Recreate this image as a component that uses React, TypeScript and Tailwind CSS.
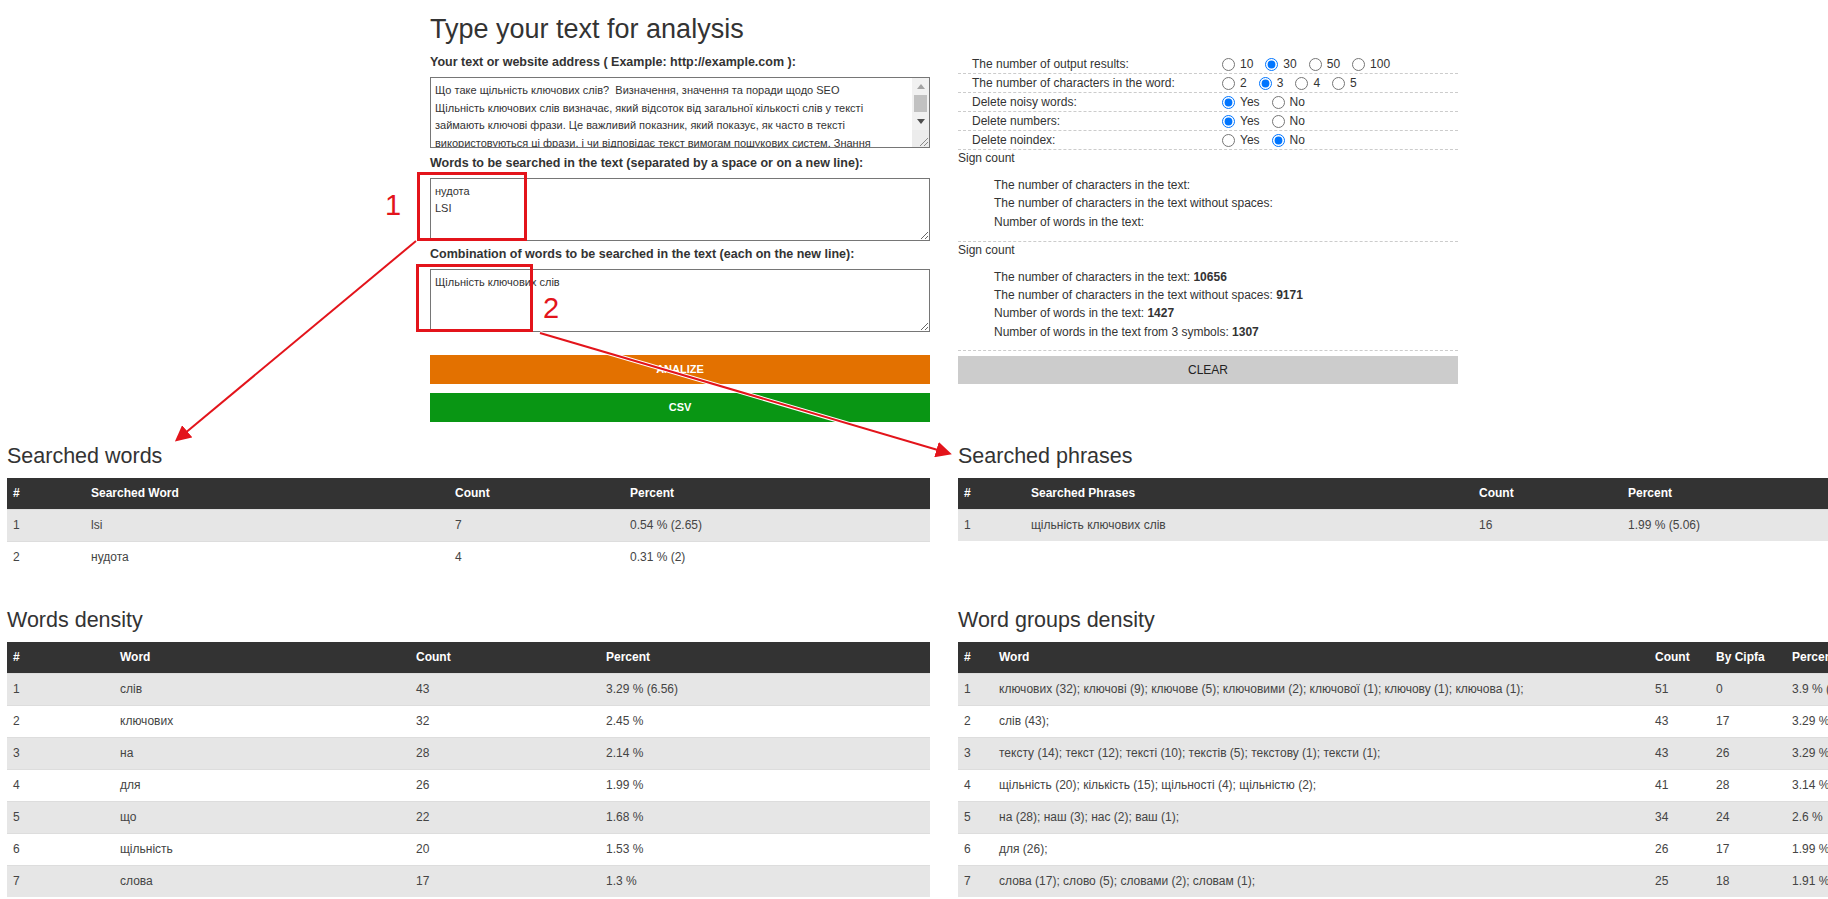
import React from "react";

type Opt = { label: string; checked?: boolean };

const options: { title: string; name: string; items: Opt[] }[] = [
  { title: "The number of output results:", name: "limit", items: [{ label: "10" }, { label: "30", checked: true }, { label: "50" }, { label: "100" }] },
  { title: "The number of characters in the word:", name: "minlen", items: [{ label: "2" }, { label: "3", checked: true }, { label: "4" }, { label: "5" }] },
  { title: "Delete noisy words:", name: "noisy", items: [{ label: "Yes", checked: true }, { label: "No" }] },
  { title: "Delete numbers:", name: "numbers", items: [{ label: "Yes", checked: true }, { label: "No" }] },
  { title: "Delete noindex:", name: "noindex", items: [{ label: "Yes" }, { label: "No", checked: true }] },
];

const sourceText =
  "Що таке щільність ключових слів?  Визначення, значення та поради щодо SEO\n" +
  "Щільність ключових слів визначає, який відсоток від загальної кількості слів у тексті\n" +
  "займають ключові фрази. Це важливий показник, який показує, як часто в тексті\n" +
  "використовуються ці фрази, і чи відповідає текст вимогам пошукових систем. Знання\n" +
  "щільності ключових слів допомагає оптимізувати текст і не перенасичувати його.\n" +
  "Як розрахувати щільність ключових слів?";

type TableProps = {
  cols: string[];
  head: string[];
  rows: string[][];
};

function DataTable({ cols, head, rows }: TableProps) {
  return (
    <table className="w-[923px] table-fixed border-collapse text-[12px]">
      <colgroup>
        {cols.map((c, i) => (
          <col key={i} className={c} />
        ))}
      </colgroup>
      <thead>
        <tr className="h-[31px] bg-[#333]">
          {head.map((h) => (
            <th key={h} className="whitespace-nowrap px-[6px] text-left font-bold text-white">
              {h}
            </th>
          ))}
        </tr>
      </thead>
      <tbody>
        {rows.map((r, i) => (
          <tr key={i} className={i % 2 === 0 ? "h-[32px] border-t border-[#ddd] bg-[#e6e6e6]" : "h-[32px] border-t border-[#ddd] bg-white"}>
            {r.map((c, j) => (
              <td key={j} className="overflow-hidden whitespace-nowrap px-[6px] text-[#444]">
                {c}
              </td>
            ))}
          </tr>
        ))}
      </tbody>
    </table>
  );
}

function Section({ title, children }: { title: string; children: React.ReactNode }) {
  return (
    <div className="mb-[13px]">
      <h3 className="mb-[10px] mt-[22px] h-[24px] text-[21.5px] leading-[24px] font-normal text-[#333]">{title}</h3>
      {children}
    </div>
  );
}

// classic scrollbar drawn over the long textarea
function Scrollbar() {
  return (
    <div className="pointer-events-none absolute right-[1px] top-[1px] flex w-[17px] flex-col bg-[#f1f1f1]">
      <div className="flex h-[17px] items-center justify-center">
        <svg width="8" height="5" viewBox="0 0 8 5">
          <path d="M0 5 L4 0 L8 5 z" fill="#a3a3a3" />
        </svg>
      </div>
      <div className="h-[18px] px-[2px]">
        <div className="h-[17px] bg-[#c1c1c1]" />
      </div>
      <div className="flex h-[17px] items-center justify-center">
        <svg width="8" height="5" viewBox="0 0 8 5">
          <path d="M0 0 L8 0 L4 5 z" fill="#505050" />
        </svg>
      </div>
      <div className="relative h-[17px] bg-[#ececec]">
        <svg className="absolute bottom-[1px] right-[1px]" width="10" height="10" viewBox="0 0 10 10">
          <path d="M2 10 L10 2 M6 10 L10 6" stroke="#8a8a8a" strokeWidth="1" />
        </svg>
      </div>
    </div>
  );
}

export default function App() {
  return (
    <div className="relative h-[899px] w-[1828px] overflow-hidden bg-white font-['Liberation_Sans',Arial,sans-serif] text-[#333]">
      {/* form + settings */}
      <div className="grid grid-cols-[923px_923px] gap-x-[28px] pl-[7px]">
        <div className="flex justify-end">
          <div className="w-[500px] pt-[14px]">
            <h1 className="h-[30px] text-[27px] leading-[30px] text-[#333]">Type your text for analysis</h1>
            <div className="mt-[10px] h-[16px] text-[12.5px] font-bold leading-[16px]">
              Your text or website address ( Example: http://example.com ):
            </div>
            <div className="relative mt-[7px]">
              <textarea
                className="block h-[71px] w-full resize-none overflow-hidden border border-[#767676] py-[4px] pl-[4px] pr-[20px] text-[11px] leading-[1.6] text-[#333] outline-none"
                defaultValue={sourceText}
              />
              <Scrollbar />
            </div>
            <div className="mt-[7px] h-[16px] text-[12.5px] font-bold leading-[16px]">
              Words to be searched in the text (separated by a space or on a new line):
            </div>
            <textarea
              className="mt-[7px] block h-[63px] w-full resize-y border border-[#767676] px-[4px] py-[4px] text-[11px] leading-[1.5] text-[#333] outline-none"
              defaultValue={"нудота\nLSI"}
            />
            <div className="mt-[5px] h-[16px] text-[12.5px] font-bold leading-[16px]">
              Combination of words to be searched in the text (each on the new line):
            </div>
            <textarea
              className="mt-[7px] block h-[63px] w-full resize-y border border-[#767676] px-[4px] py-[4px] text-[11px] leading-[1.6] text-[#333] outline-none"
              defaultValue="Щільність ключових слів"
            />
            <button className="mt-[23px] flex h-[29px] w-full items-center justify-center bg-[#e37100] text-[11px] font-bold text-white">
              ANALIZE
            </button>
            <button className="mt-[9px] flex h-[29px] w-full items-center justify-center bg-[#099614] text-[11px] font-bold text-white">
              CSV
            </button>
          </div>
        </div>

        <div className="w-[500px] pt-[55px] text-[12px]">
          {options.map((o) => (
            <div key={o.name} className="flex h-[19px] items-center border-b border-dashed border-[#ccc]">
              <div className="w-[264px] pl-[14px]">{o.title}</div>
              <div className="flex items-center">
                {o.items.map((it) => (
                  <label key={it.label} className="mr-[12px] flex items-center gap-[5px]">
                    <input type="radio" name={o.name} defaultChecked={it.checked} className="m-0 h-[13px] w-[13px]" />
                    <span>{it.label}</span>
                  </label>
                ))}
              </div>
            </div>
          ))}

          <div className="border-b border-dashed border-[#ccc] pb-[10px]">
            <div className="h-[16px] leading-[16px]">Sign count</div>
            <div className="mt-[10px] pl-[36px] leading-[18.3px]">
              <div>The number of characters in the text:</div>
              <div>The number of characters in the text without spaces:</div>
              <div>Number of words in the text:</div>
            </div>
          </div>

          <div className="border-b border-dashed border-[#ccc] pb-[9px]">
            <div className="h-[16px] leading-[16px]">Sign count</div>
            <div className="mt-[10px] pl-[36px] leading-[18.3px]">
              <div>
                The number of characters in the text: <b>10656</b>
              </div>
              <div>
                The number of characters in the text without spaces: <b>9171</b>
              </div>
              <div>
                Number of words in the text: <b>1427</b>
              </div>
              <div>
                Number of words in the text from 3 symbols: <b>1307</b>
              </div>
            </div>
          </div>

          <button className="mt-[5px] flex h-[28px] w-full items-center justify-center bg-[#ccc] text-[12px] text-[#222]">
            CLEAR
          </button>
        </div>
      </div>

      {/* results */}
      <div className="grid grid-cols-[923px_923px] items-start gap-x-[28px] pl-[7px]">
        <Section title="Searched words">
          <DataTable
            cols={["w-[78px]", "w-[364px]", "w-[175px]", "w-[306px]"]}
            head={["#", "Searched Word", "Count", "Percent"]}
            rows={[
              ["1", "lsi", "7", "0.54 % (2.65)"],
              ["2", "нудота", "4", "0.31 % (2)"],
            ]}
          />
        </Section>
        <Section title="Searched phrases">
          <DataTable
            cols={["w-[67px]", "w-[448px]", "w-[149px]", "w-[259px]"]}
            head={["#", "Searched Phrases", "Count", "Percent"]}
            rows={[["1", "щільність ключових слів", "16", "1.99 % (5.06)"]]}
          />
        </Section>
        <Section title="Words density">
          <DataTable
            cols={["w-[107px]", "w-[296px]", "w-[190px]", "w-[330px]"]}
            head={["#", "Word", "Count", "Percent"]}
            rows={[
              ["1", "слів", "43", "3.29 % (6.56)"],
              ["2", "ключових", "32", "2.45 %"],
              ["3", "на", "28", "2.14 %"],
              ["4", "для", "26", "1.99 %"],
              ["5", "що", "22", "1.68 %"],
              ["6", "щільність", "20", "1.53 %"],
              ["7", "слова", "17", "1.3 %"],
            ]}
          />
        </Section>
        <Section title="Word groups density">
          <DataTable
            cols={["w-[35px]", "w-[656px]", "w-[61px]", "w-[76px]", "w-[95px]"]}
            head={["#", "Word", "Count", "By Cipfa", "Percent"]}
            rows={[
              ["1", "ключових (32); ключові (9); ключове (5); ключовими (2); ключової (1); ключову (1); ключова (1);", "51", "0", "3.9 % (7.8)"],
              ["2", "слів (43);", "43", "17", "3.29 %"],
              ["3", "тексту (14); текст (12); тексті (10); текстів (5); текстову (1); тексти (1);", "43", "26", "3.29 %"],
              ["4", "щільність (20); кількість (15); щільності (4); щільністю (2);", "41", "28", "3.14 %"],
              ["5", "на (28); наш (3); нас (2); ваш (1);", "34", "24", "2.6 %"],
              ["6", "для (26);", "26", "17", "1.99 %"],
              ["7", "слова (17); слово (5); словами (2); словам (1);", "25", "18", "1.91 %"],
            ]}
          />
        </Section>
      </div>

      {/* red annotation marks */}
      <svg className="pointer-events-none absolute left-0 top-0" width="1828" height="899">
        <defs>
          <marker id="head" markerWidth="8" markerHeight="8" refX="6" refY="4" orient="auto" markerUnits="strokeWidth">
            <path d="M0,0 L8,4 L0,8 z" fill="#e3141b" />
          </marker>
        </defs>
        <rect x="418.5" y="173.5" width="107" height="66" fill="none" stroke="#e3141b" strokeWidth="3" />
        <rect x="417.5" y="265.5" width="114" height="65" fill="none" stroke="#e3141b" strokeWidth="3" />
        <line x1="416" y1="241" x2="178" y2="439" stroke="white" strokeWidth="4" />
        <line x1="416" y1="241" x2="178" y2="439" stroke="#e3141b" strokeWidth="2" markerEnd="url(#head)" />
        <line x1="540" y1="333" x2="948" y2="453" stroke="white" strokeWidth="4" />
        <line x1="540" y1="333" x2="948" y2="453" stroke="#e3141b" strokeWidth="2" markerEnd="url(#head)" />
      </svg>
      <span className="absolute left-[385px] top-[190px] text-[29px] leading-[30px] text-[#e3141b]">1</span>
      <span className="absolute left-[543px] top-[293px] text-[29px] leading-[30px] text-[#e3141b]">2</span>
    </div>
  );
}
